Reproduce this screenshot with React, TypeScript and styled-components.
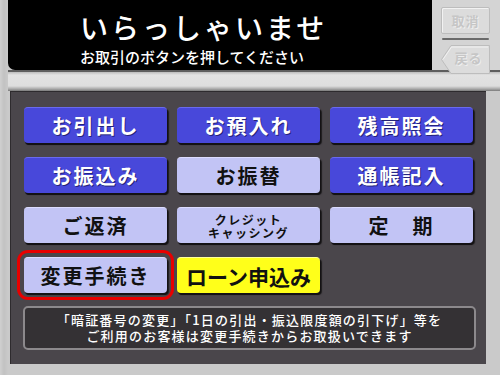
import React from "react";
import styled, { createGlobalStyle, css } from "styled-components";

const Global = createGlobalStyle`
  html, body { margin: 0; padding: 0; background: #c6c6c6; }
  body { width: 500px; height: 375px; overflow: hidden; font-family: "Noto Sans CJK JP", "Noto Sans", sans-serif; }
`;

const Frame = styled.div`
  width: 500px;
  height: 375px;
  display: flex;
  flex-direction: column;
  background: linear-gradient(90deg, #d0d0d0 0px, #c2c2c2 4px, #cacaca 8px);
  box-sizing: border-box;
`;

const Top = styled.div`
  height: 70px;
  display: flex;
  padding-left: 8px;
`;

const Screen = styled.div`
  flex: 1;
  background: #000;
  border-bottom-left-radius: 7px;
  padding: 9px 0 0 72px;
  display: flex;
  flex-direction: column;
  color: #fff;
`;

const Title = styled.div`
  font-size: 28px;
  font-weight: 500;
  letter-spacing: 3px;
  line-height: 36px;
`;

const Subtitle = styled.div`
  font-size: 15px;
  font-weight: 500;
  line-height: 20px;
  margin-top: 2px;
`;

const Side = styled.div`
  width: 68px;
  background: #d4d4d4;
  display: flex;
  flex-direction: column;
  align-items: flex-start;
  padding: 7px 0 0 9px;
  box-sizing: border-box;
`;

const SideButton = styled.div`
  width: 49px;
  height: 31px;
  box-sizing: border-box;
  border: 1px solid #bdbdbd;
  border-radius: 2px;
  background: #dcdcdc;
  box-shadow: inset 1px 1px 0 #f2f2f2;
  display: flex;
  align-items: center;
  justify-content: center;
  font-size: 13px;
  font-weight: 700;
  color: #c6c6c6;
  text-shadow: 1px 1px 0 #eeeeee;
  letter-spacing: 1px;
`;

const Divider = styled.div`
  width: 47px;
  height: 2px;
  margin: 4px 0 0 1px;
  background: #6a6a6a;
  border-radius: 1px;
`;

const BackButton = styled.div`
  position: relative;
  width: 49px;
  height: 29px;
  margin-top: 5px;
  display: flex;
  align-items: center;
  justify-content: center;
  padding-left: 6px;
  box-sizing: border-box;
  font-size: 13px;
  font-weight: 700;
  color: #c6c6c6;
  text-shadow: 1px 1px 0 #eeeeee;
  letter-spacing: 1px;
  svg { position: absolute; left: 0; top: 0; }
  span { position: relative; }
`;

const Ledge = styled.div`
  height: 21px;
  box-sizing: border-box;
  border-top: 2px solid #5e5e5e;
  background: linear-gradient(180deg, #bcbcbc 0px, #e2e2e2 3px, #dedede 14px, #a8a8a8 17px, #7a7a7a 19px);
  margin-left: 8px;
`;

const Body = styled.div`
  flex: 1;
  display: flex;
`;

const Panel = styled.div`
  margin: 0 14px 11px 10px;
  flex: 1;
  background: #4a464b;
  box-shadow: inset 1px 1px 0 #2e2b2e;
  padding: 16px 0 0 14px;
  display: flex;
  flex-direction: column;
`;

const Grid = styled.div`
  display: grid;
  grid-template-columns: repeat(3, 143px);
  grid-auto-rows: 36px;
  column-gap: 10px;
  row-gap: 14px;
`;

type Kind = "blue" | "light" | "yellow";

const Btn = styled.div<{ $kind: Kind; $small?: boolean; $marked?: boolean }>`
  box-sizing: border-box;
  border-radius: 4px;
  display: flex;
  align-items: center;
  justify-content: center;
  text-align: center;
  font-weight: 700;
  font-size: 20px;
  letter-spacing: 2px;
  box-shadow: 1px 2px 0 #141214, 2px 2px 1px #1e1c1e;
  ${(p) =>
    p.$kind === "blue"
      ? css`
          background: #4848da;
          color: #fff;
          border-top: 1px solid #6a6aee;
          text-shadow: 1px 1px 0 #23237a;
        `
      : p.$kind === "light"
      ? css`
          background: #c2c4f5;
          color: #111;
          border-top: 1px solid #dcdcff;
        `
      : css`
          background: #ffff1a;
          color: #111;
          border-top: 1px solid #ffff99;
          font-size: 21px;
          letter-spacing: 0px;
        `}
  ${(p) =>
    p.$small &&
    css`
      font-size: 12px;
      line-height: 13px;
      letter-spacing: 1.5px;
      flex-direction: column;
      span { display: block; height: 13px; overflow: visible; }
    `}
  ${(p) =>
    p.$marked &&
    css`
      outline: 3px solid #e80000;
      outline-offset: 4px;
    `}
`;

const Info = styled.div`
  margin: 13px 10px 0 -1px;
  height: 44px;
  box-sizing: border-box;
  border: 2px solid #8c898c;
  border-radius: 5px;
  background: #343134;
  color: #fff;
  font-size: 13px;
  font-weight: 500;
  letter-spacing: 1.2px;
  text-align: center;
  display: flex;
  flex-direction: column;
  justify-content: center;
`;

const InfoLine = styled.div`
  line-height: 16px;
  height: 16px;
`;

const buttons: { label: React.ReactNode; kind: Kind; small?: boolean; marked?: boolean }[] = [
  { label: "お引出し", kind: "blue" },
  { label: "お預入れ", kind: "blue" },
  { label: "残高照会", kind: "blue" },
  { label: "お振込み", kind: "blue" },
  { label: "お振替", kind: "light" },
  { label: "通帳記入", kind: "blue" },
  { label: "ご返済", kind: "light" },
  {
    label: (
      <>
        <span>クレジット</span>
        <span>キャッシング</span>
      </>
    ),
    kind: "light",
    small: true,
  },
  { label: "定　期", kind: "light" },
  { label: "変更手続き", kind: "light", marked: true },
  { label: "ローン申込み", kind: "yellow" },
];

export default function App() {
  return (
    <>
      <Global />
      <Frame>
        <Top>
          <Screen>
            <Title>いらっしゃいませ</Title>
            <Subtitle>お取引のボタンを押してください</Subtitle>
          </Screen>
          <Side>
            <SideButton>取消</SideButton>
            <Divider />
            <BackButton>
              <svg width="49" height="29" viewBox="0 0 49 29">
                <path d="M0.5 14.5 L10 0.5 H48.5 V28.5 H10 Z" fill="#dcdcdc" stroke="#bdbdbd" strokeWidth="1" />
                <path d="M2 14.5 L10.5 2 H47" fill="none" stroke="#f2f2f2" strokeWidth="1" />
              </svg>
              <span>戻る</span>
            </BackButton>
          </Side>
        </Top>
        <Ledge />
        <Body>
          <Panel>
            <Grid>
              {buttons.map((b, i) => (
                <Btn key={i} $kind={b.kind} $small={b.small} $marked={b.marked}>
                  {b.label}
                </Btn>
              ))}
            </Grid>
            <Info>
              <InfoLine>「暗証番号の変更」「1日の引出・振込限度額の引下げ」等を</InfoLine>
              <InfoLine>ご利用のお客様は変更手続きからお取扱いできます</InfoLine>
            </Info>
          </Panel>
        </Body>
      </Frame>
    </>
  );
}
